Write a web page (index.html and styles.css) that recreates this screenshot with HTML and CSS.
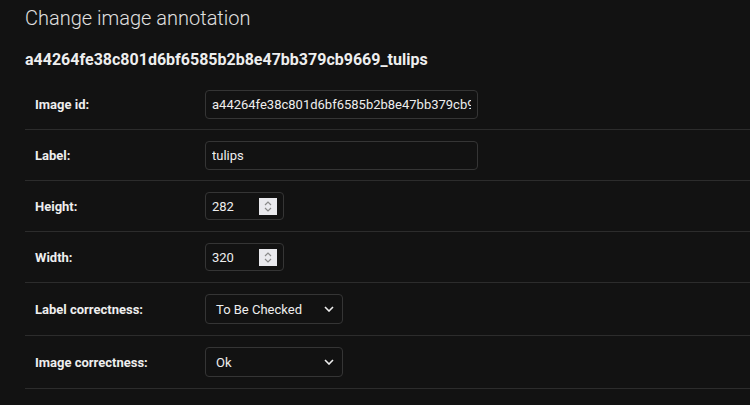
FILE: index.html
```html
<!DOCTYPE html>
<html lang="en">
<head>
<meta charset="utf-8">
<title>Change image annotation</title>
<link rel="stylesheet" href="styles.css">
</head>
<body>
<div class="content">
  <h1>Change image annotation</h1>
  <h2>a44264fe38c801d6bf6585b2b8e47bb379cb9669_tulips</h2>
  <form class="fieldset">
    <div class="form-row">
      <label class="field-label" for="id_image_id">Image id:</label>
      <input class="text-input" id="id_image_id" type="text" value="a44264fe38c801d6bf6585b2b8e47bb379cb9669_tulips">
    </div>
    <div class="form-row">
      <label class="field-label" for="id_label">Label:</label>
      <input class="text-input" id="id_label" type="text" value="tulips">
    </div>
    <div class="form-row">
      <label class="field-label" for="id_height">Height:</label>
      <div class="number-input">
        <input class="number-value" id="id_height" type="text" value="282">
        <span class="spinner"><svg viewBox="0 0 18 17" width="18" height="17"><path d="M6 7 L9 4 L12 7" /><path d="M6 10 L9 13 L12 10" /></svg></span>
      </div>
    </div>
    <div class="form-row">
      <label class="field-label" for="id_width">Width:</label>
      <div class="number-input">
        <input class="number-value" id="id_width" type="text" value="320">
        <span class="spinner"><svg viewBox="0 0 18 17" width="18" height="17"><path d="M6 7 L9 4 L12 7" /><path d="M6 10 L9 13 L12 10" /></svg></span>
      </div>
    </div>
    <div class="form-row tall">
      <label class="field-label" for="id_label_correctness">Label correctness:</label>
      <div class="select">
        <span class="select-text">To Be Checked</span>
        <svg class="chevron" viewBox="0 0 10 6" width="10" height="6"><path d="M1 1 L5 5 L9 1" /></svg>
      </div>
    </div>
    <div class="form-row tall">
      <label class="field-label" for="id_image_correctness">Image correctness:</label>
      <div class="select">
        <span class="select-text">Ok</span>
        <svg class="chevron" viewBox="0 0 10 6" width="10" height="6"><path d="M1 1 L5 5 L9 1" /></svg>
      </div>
    </div>
  </form>
</div>
</body>
</html>
```

FILE: styles.css
```css
html, body {
  margin: 0;
  padding: 0;
  background: #121212;
  color: #eeeeee;
  font-family: Roboto, "Liberation Sans", sans-serif;
  height: 100%;
  overflow: hidden;
}

.content {
  padding: 6px 0 0 25px;
}

h1 {
  margin: 0;
  font-size: 20px;
  line-height: 24px;
  font-weight: 300;
  color: #e0e0e0;
}

h2 {
  margin: 20px 0 9px;
  font-size: 16px;
  line-height: 20px;
  font-weight: 700;
  color: #eeeeee;
}

.fieldset {
  margin: 0;
  padding: 0;
}

.form-row {
  display: flex;
  align-items: center;
  padding: 10px;
  border-bottom: 1px solid #2c2c2c;
  height: 30px;
  font-size: 13px;
}

.form-row.tall {
  height: 32px;
}

.field-label {
  width: 160px;
  padding-right: 10px;
  font-weight: 700;
  color: #eeeeee;
}

.text-input {
  box-sizing: border-box;
  width: 273px;
  height: 29px;
  padding: 0 6px;
  border: 1px solid #353535;
  border-radius: 4px;
  background: #121212;
  color: #eeeeee;
  font-family: Roboto, "Liberation Sans", sans-serif;
  font-size: 13px;
  outline: none;
}

.number-input {
  box-sizing: border-box;
  display: flex;
  align-items: center;
  width: 79px;
  height: 28px;
  padding: 0 6px;
  border: 1px solid #353535;
  border-radius: 4px;
}

.number-value {
  flex: 1;
  min-width: 0;
  border: 0;
  padding: 0;
  background: transparent;
  color: #eeeeee;
  font-family: Roboto, "Liberation Sans", sans-serif;
  font-size: 13px;
  outline: none;
}

.spinner {
  display: block;
  width: 18px;
  height: 17px;
  background: #e9e9ed;
}

.spinner svg {
  display: block;
  fill: none;
  stroke: #8a8a8a;
  stroke-width: 1.2;
}

.select {
  box-sizing: border-box;
  display: flex;
  align-items: center;
  justify-content: space-between;
  width: 138px;
  height: 30px;
  padding: 0 8px 0 10px;
  border: 1px solid #353535;
  border-radius: 4px;
  color: #eeeeee;
}

.chevron {
  fill: none;
  stroke: #eeeeee;
  stroke-width: 1.6;
}
```
